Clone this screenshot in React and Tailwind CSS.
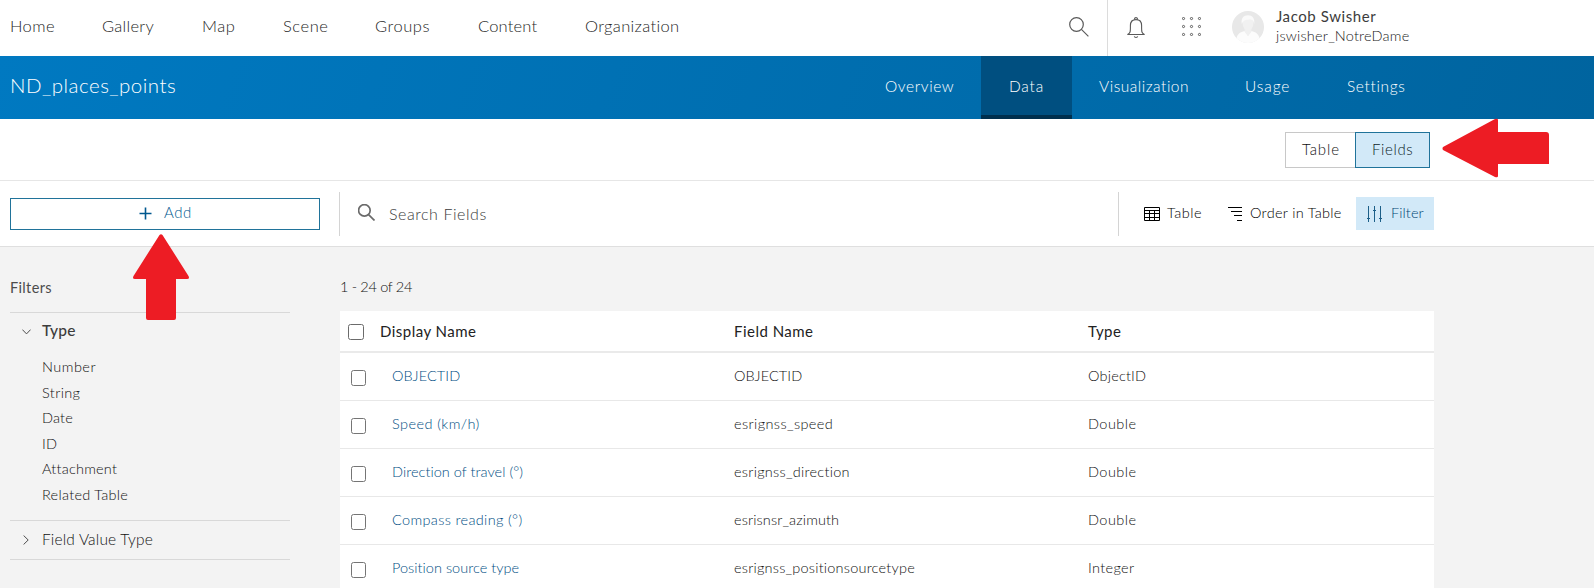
import React from "react";

const NAV = [
  ["Home", "w-[92px] tracking-[0.4px]"],
  ["Gallery", "w-[100px] tracking-[0.28px]"],
  ["Map", "w-[81px] tracking-[0.55px]"],
  ["Scene", "w-[92px] tracking-[0.57px]"],
  ["Groups", "w-[103px] tracking-[0.54px]"],
  ["Content", "w-[107px] tracking-[0.18px]"],
  ["Organization", "tracking-[0.34px]"],
];

const TABS = [
  ["Overview", "w-[96px] tracking-[0.6px]", false],
  ["Data", "w-[91px] tracking-[0.78px]", true],
  ["Visualization", "w-[173px] pl-[27px] tracking-[0.52px]", false],
  ["Usage", "w-[102px] tracking-[0.9px]", false],
  ["Settings", "tracking-[0.64px]", false],
];

const TYPES = [
  ["Number", "tracking-[0.48px]"],
  ["String", "tracking-[0.38px]"],
  ["Date", "tracking-[0.18px]"],
  ["ID", "tracking-[0.1px]"],
  ["Attachment", "tracking-[0.22px]"],
  ["Related Table", "tracking-[0.28px]"],
];

const ROWS = [
  ["OBJECTID", "tracking-[0.08px]", "OBJECTID", "tracking-[0.08px]", "ObjectID", "tracking-[0.2px]"],
  ["Speed (km/h)", "tracking-[0.42px]", "esrignss_speed", "tracking-[0.4px]", "Double", "tracking-[0.45px]"],
  ["Direction of travel (°)", "tracking-[0.04px]", "esrignss_direction", "tracking-[0.27px]", "Double", "tracking-[0.45px]"],
  ["Compass reading (°)", "tracking-[0.34px]", "esrisnsr_azimuth", "tracking-[0.12px]", "Double", "tracking-[0.45px]"],
  ["Position source type", "tracking-[0.03px]", "esrignss_positionsourcetype", "tracking-[0.22px]", "Integer", "tracking-[0.35px]"],
];

function Magnifier({ className, strokeWidth }) {
  return (
    <svg viewBox="0 0 20 20" fill="none" stroke="currentColor" strokeWidth={strokeWidth} className={className}>
      <circle cx="7.5" cy="7.5" r="6.8" />
      <path d="M12.4 12.4L19.4 19.4" />
    </svg>
  );
}

function Header() {
  const dots = [1.5, 9.5, 17.5];
  return (
    <header className="flex h-[56px] bg-white pl-[9px] text-[#595959]">
      <nav className="flex h-[53px] w-[1060px] items-center pl-px text-[16.5px] font-light text-[#262626]">
        {NAV.map(([label, cls]) => (
          <a key={label} className={cls}>{label}</a>
        ))}
      </nav>
      <div className="flex w-[39px] border-r border-[#dcdcdc] pt-[17px]">
        <Magnifier className="h-[20px] w-[20px]" strokeWidth="1.2" />
      </div>
      <svg viewBox="0 0 18 22" fill="none" stroke="currentColor" strokeWidth="1.1" className="mt-[17px] ml-[19px] h-[22px] w-[18px]">
        <path d="M0.3 17.5H17.7M.6 17.4C3.4 16 3.4 14.5 3.4 11V8.5C3.4 5 5.6 2.6 9 2.6S14.6 5 14.6 8.5V11C14.6 14.5 14.6 16 17.4 17.4" />
        <path d="M7.6 2.8V1.6C7.6 .3 10.4 .3 10.4 1.6V2.8M7.3 19.4C7.6 20.8 10.4 20.8 10.7 19.4" />
      </svg>
      <svg viewBox="0 0 19 19" fill="none" stroke="currentColor" strokeWidth="1" className="mt-[17px] ml-[37px] h-[19px] w-[19px]">
        {dots.map((y) => dots.map((x) => <circle key={`${x}-${y}`} cx={x} cy={y} r="1.1" />))}
      </svg>
      <svg viewBox="0 0 32 32" className="mt-[11px] ml-[31px] h-[32px] w-[32px]">
        <circle cx="16" cy="16" r="16" fill="#e8e8e8" />
        <path d="M4.6 27.2C5.5 22.4 8.5 21.2 12.5 20L16 25L19.5 20C23.5 21.2 26.5 22.4 27.4 27.2A16 16 0 0 1 4.6 27.2Z" fill="#fcfcfc" />
        <path d="M12.7 17H19.3V21L16 25L12.7 21Z" fill="#f0f0f0" />
        <ellipse cx="16" cy="12.3" rx="5.4" ry="7" fill="#f1f1f1" />
        <path d="M9.8 13C8.8 7.5 11.5 4.3 16 4.3S23 7.5 22.2 13C21.5 9.5 20 8.4 18 8.6S11.5 8.5 9.8 13Z" fill="#fafafa" />
      </svg>
      <div className="ml-[12px] whitespace-nowrap">
        <div className="mt-[6px] text-[15px] leading-[20px] tracking-[0.57px] text-[#3c3c3c]">Jacob Swisher</div>
        <div className="text-[14.5px] leading-[19px] font-light tracking-[0.2px] text-[#222]">jswisher_NotreDame</div>
      </div>
    </header>
  );
}

function TitleBar() {
  return (
    <div className="flex h-[63px] bg-linear-[110deg] from-[#0079c1] to-[#00649f] pl-[9px] text-white">
      <h1 className="flex h-[59px] w-[877px] items-center pl-px text-[20.5px] font-light tracking-[0.49px]">ND_places_points</h1>
      <nav className="-ml-px flex w-[600px] text-[15.5px] leading-[61px] font-light">
        {TABS.map(([label, cls, active]) =>
          active ? (
            <a key={label} className={`${cls} h-[63px] border-b-4 border-[#002f4d] bg-[#004f80] pl-[28px]`}>{label}</a>
          ) : (
            <a key={label} className={cls}>{label}</a>
          )
        )}
      </nav>
    </div>
  );
}

function Toolbar() {
  return (
    <div className="flex h-[66px] border-b border-[#dfdfdf] bg-white pl-[10px]">
      <button className="mt-[17px] flex h-[32px] w-[310px] items-center border border-[#20739a] pl-[128px] text-[15px] font-light tracking-[0.5px] text-[#00588f]">
        <svg viewBox="0 0 13 13" stroke="currentColor" strokeWidth="1.6" className="mr-[12px] -mt-[2px] h-[13px] w-[13px]">
          <path d="M6.5 .5V12.5M.5 6.5H12.5" />
        </svg>
        <span className="-mt-[3px]">Add</span>
      </button>
      <div className="mt-[11px] ml-[19px] flex h-[44px] w-[780px] border-x border-[#d4d4d4] pl-[18px] text-[#6a6a6a]">
        <Magnifier className="mt-[12px] h-[17px] w-[17px]" strokeWidth="2" />
        <span className="ml-[14px] text-[16px] leading-[43px] font-light tracking-[0.56px] text-[#3a3a3a]">Search Fields</span>
      </div>
      <div className="mt-[16px] flex h-[33px] w-[315px] items-center text-[14.5px] leading-[32px] font-light text-black">
        <svg viewBox="0 0 16 14" fill="none" stroke="#000" strokeWidth="1" className="ml-[25px] h-[14px] w-[16px]">
          <path d="M.5 .5H15.5V13.5H.5ZM.5 3.5H15.5M.5 6.5H15.5M.5 10.5H15.5M5.5 4V13M10.5 4V13" />
        </svg>
        <span className="ml-[7px] w-[61px] pb-[2px] tracking-[0.5px]">Table</span>
        <svg viewBox="0 0 14 14" stroke="#000" strokeWidth="1" className="h-[14px] w-[14px]">
          <path d="M0 .5H14M3 4.5H14M6 8.5H14M9 13.5H14" />
        </svg>
        <span className="ml-[8px] w-[106px] pb-[2px] whitespace-nowrap tracking-[0.3px]">Order in Table</span>
        <div className="flex h-[33px] w-[78px] items-center bg-[#d2e9f8] text-[#004674]">
          <svg viewBox="0 0 16 16" fill="none" stroke="#1c5f88" strokeWidth="1" className="ml-[11px] h-[16px] w-[16px]">
            <path d="M1.5 0V16M7.5 0V16M13.5 0V16M0 12.5H3M6 4.5H9M12 12.5H15" />
          </svg>
          <span className="ml-[8px] pb-[2px] tracking-[0.1px]">Filter</span>
        </div>
      </div>
    </div>
  );
}

function Filters() {
  return (
    <aside className="w-[280px] text-[#4c4c4c]">
      <h2 className="mt-[30px] -ml-px h-[35px] pl-px text-[14.5px] leading-[22px] tracking-[0.35px]">Filters</h2>
      <section className="h-[208px] border-t border-[#d8d8d8]">
        <div className="flex h-[36px] items-center pl-[12px]">
          <svg viewBox="0 0 9 6" fill="none" stroke="currentColor" className="mt-[2px] h-[6px] w-[9px]"><path d="M.4 .6L4.5 4.9L8.6 .6" /></svg>
          <span className="ml-[11px] text-[15.5px] font-medium tracking-[0.2px] text-[#3c3c3c]">Type</span>
        </div>
        <ul className="mt-[5px] pl-[32px] text-[14.5px] leading-[25.6px] font-light text-[#111]">
          {TYPES.map(([label, cls]) => <li key={label} className={cls}>{label}</li>)}
        </ul>
      </section>
      <section className="flex h-[40px] items-center border-y border-[#d8d8d8] pl-[13px]">
        <svg viewBox="0 0 6 10" fill="none" stroke="currentColor" className="h-[10px] w-[6px]"><path d="M.6 .5L5.2 5L.6 9.5" /></svg>
        <span className="ml-[13px] text-[15.5px] font-light tracking-[0.17px] text-[#111]">Field Value Type</span>
      </section>
    </aside>
  );
}

function FieldsTable() {
  return (
    <main className="ml-[50px] w-[1094px]">
      <p className="mt-[29px] h-[35px] text-[14.5px] leading-[22px] font-light tracking-[-0.32px] text-[#111]">1 - 24 of 24</p>
      <div className="bg-white">
        <div className="flex h-[42px] border-b-2 border-[#eaeaea] text-[15px] leading-[41px] text-[#222]">
          <span className="mt-[13px] ml-[8px] h-[16px] w-[16px] rounded-[2.5px] border border-[#6b6b6b] bg-white" />
          <span className="ml-[16px] w-[354px] tracking-[0.47px]">Display Name</span>
          <span className="w-[354px] tracking-[0.48px]">Field Name</span>
          <span className="tracking-[0.4px]">Type</span>
        </div>
        {ROWS.map(([name, nameCls, field, fieldCls, type, typeCls]) => (
          <div key={name} className="flex h-[48px] border-b border-[#e8e8e8] text-[14.5px] leading-[46px] font-light text-[#111]">
            <span className="mt-[17px] ml-[11px] h-[16px] w-[15px] rounded-[2.5px] border border-[#757575] bg-white" />
            <span className="ml-[26px] w-[342px] text-[#004e83]"><span className={nameCls}>{name}</span></span>
            <span className="w-[354px]"><span className={fieldCls}>{field}</span></span>
            <span className={typeCls}>{type}</span>
          </div>
        ))}
      </div>
    </main>
  );
}

export default function App() {
  return (
    <div className="relative h-[588px] w-[1594px] overflow-hidden bg-[#f3f3f3] font-[Lato,sans-serif]">
      <Header />
      <TitleBar />
      <div className="flex h-[62px] border-b border-[#e6e6e6] bg-white pt-[13px] pl-[1285px] text-[15px] leading-[33px] font-light">
        <div className="h-[36px] w-[70px] border border-r-0 border-[#c8c8c8] pl-[16px] tracking-[0.85px] text-[#111]">Table</div>
        <div className="h-[36px] w-[75px] border border-[#20739a] bg-[#d2e9f8] pl-[16px] tracking-[0.64px] text-[#0c1d28]">Fields</div>
      </div>
      <Toolbar />
      <div className="flex pl-[10px]">
        <Filters />
        <FieldsTable />
      </div>
      <svg viewBox="0 0 108 60" fill="#ed1c24" className="absolute top-[118px] left-[1442px] h-[60px] w-[108px]">
        <path d="M1 29L53 1Q56 0 56 2V14H104Q107 14 107 17V46H56V58Q56 60 53 59L1 32Q0 30.5 1 29Z" />
      </svg>
      <svg viewBox="0 0 56 87" fill="#ed1c24" className="absolute top-[234px] left-[133px] h-[87px] w-[56px]">
        <path d="M26.5 1Q28 -.5 29.5 1L55.5 42Q57 45 54 45H43V84Q43 86 41 86H15Q13 86 13 84V45H2Q-1 45 .5 42Z" />
      </svg>
    </div>
  );
}
